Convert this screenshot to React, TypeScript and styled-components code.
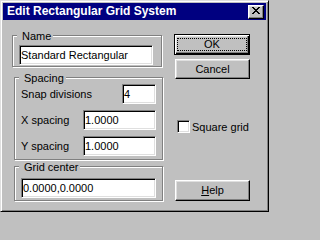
import React from "react";
import styled, { createGlobalStyle } from "styled-components";

const Global = createGlobalStyle`
  html, body { margin: 0; padding: 0; background: #c0c0c0; }
  body {
    font-family: "Liberation Sans", Arial, sans-serif;
    font-size: 11px;
    color: #000;
  }
  #root { width: 269px; height: 212px; }
`;

const Window = styled.div`
  box-sizing: border-box;
  width: 269px;
  height: 212px;
  background: #c0c0c0;
  border: 1px solid;
  border-color: #dfdfdf #000 #000 #dfdfdf;
  box-shadow: inset 1px 1px 0 #fff, inset -1px -1px 0 #808080;
  padding: 2px;
  display: flex;
  flex-direction: column;
`;

const TitleBar = styled.div`
  height: 17px;
  background: #000080;
  display: flex;
  align-items: flex-start;
  padding: 0 2px;
  flex: none;
`;

const TitleText = styled.span`
  color: #fff;
  font-weight: bold;
  font-size: 12px;
  line-height: 17px;
  padding-left: 2px;
  white-space: nowrap;
`;

const CloseButton = styled.button`
  box-sizing: border-box;
  margin: 2px 0 0 auto;
  width: 16px;
  height: 14px;
  padding: 1px 0 0 3px;
  border: 1px solid;
  border-color: #fff #000 #000 #fff;
  box-shadow: inset -1px -1px 0 #808080, inset 1px 1px 0 #dfdfdf;
  background: #c0c0c0;
  display: flex;
  align-items: flex-start;
  justify-content: flex-start;
  svg { display: block; }
`;

const Body = styled.div`
  flex: 1;
  display: flex;
  padding: 14px 0 0 9px;
  gap: 10px;
`;

const LeftCol = styled.div`
  width: 152px;
  display: flex;
  flex-direction: column;
  padding-top: 1px;
`;

const RightCol = styled.div`
  width: 80px;
  display: flex;
  flex-direction: column;
  align-items: flex-start;
`;

const GroupBox = styled.div<{ $w: number; $ml?: number; $mt?: number; $pad: string }>`
  position: relative;
  box-sizing: border-box;
  width: ${(p) => p.$w}px;
  margin-left: ${(p) => p.$ml ?? 0}px;
  margin-top: ${(p) => p.$mt ?? 0}px;
  padding: ${(p) => p.$pad};
  border: 1px solid #808080;
  box-shadow: 1px 1px 0 #fff, inset 1px 1px 0 #fff;
`;

const Legend = styled.span`
  position: absolute;
  top: -6px;
  left: 4px;
  padding: 0 2px 0 5px;
  background: #c0c0c0;
  line-height: 13px;
  white-space: nowrap;
`;

const Row = styled.div`
  display: flex;
  align-items: center;
  justify-content: space-between;
  height: 20px;
  & + & { margin-top: 6px; }
`;

const Label = styled.span`
  white-space: nowrap;
`;

const Field = styled.input<{ $w: number }>`
  box-sizing: border-box;
  display: block;
  width: ${(p) => p.$w}px;
  height: 20px;
  margin: 0;
  padding: 0 0 0 1px;
  border: 1px solid;
  border-color: #808080 #fff #fff #808080;
  box-shadow: inset 1px 1px 0 #000, inset -1px -1px 0 #dfdfdf;
  background: #fff;
  font: inherit;
  font-size: 11px;
  color: #000;
  outline: none;
`;

const Button = styled.button<{ $w: number; $h: number; $ml?: number; $mt?: number }>`
  box-sizing: border-box;
  width: ${(p) => p.$w}px;
  height: ${(p) => p.$h}px;
  margin: ${(p) => p.$mt ?? 0}px 0 0 ${(p) => p.$ml ?? 0}px;
  padding: 0;
  border: 1px solid;
  border-color: #fff #000 #000 #fff;
  box-shadow: inset -1px -1px 0 #808080, inset 1px 1px 0 #dfdfdf;
  background: #c0c0c0;
  font: inherit;
  font-size: 11px;
  color: #000;
  display: flex;
  align-items: center;
  justify-content: center;
  line-height: 13px;
  u { text-underline-offset: 1px; }
`;

const DefaultButton = styled(Button)`
  padding: 3px 2px;
  border-color: #000;
  box-shadow: inset 1px 1px 0 #fff, inset -1px -1px 0 #000,
    inset -2px -2px 0 #808080, inset 2px 2px 0 #dfdfdf;
`;

const FocusRing = styled.span`
  box-sizing: border-box;
  width: 100%;
  height: 100%;
  border: 1px dotted #000;
  display: flex;
  align-items: center;
  justify-content: center;
`;

const CheckRow = styled.label<{ $ml: number; $mt: number }>`
  display: flex;
  align-items: center;
  gap: 2px;
  margin: ${(p) => p.$mt}px 0 0 ${(p) => p.$ml}px;
  white-space: nowrap;
`;

const CheckBox = styled.span`
  box-sizing: border-box;
  width: 13px;
  height: 13px;
  border: 1px solid;
  border-color: #808080 #fff #fff #808080;
  box-shadow: inset 1px 1px 0 #000, inset -1px -1px 0 #dfdfdf;
  background: #fff;
  flex: none;
`;

const CloseGlyph = () => (
  <svg width="8" height="7" viewBox="0 0 8 7" shapeRendering="crispEdges">
    <path
      fill="#000"
      d="M0 0h2v1H0zM6 0h2v1H6zM1 1h2v1H1zM5 1h2v1H5zM2 2h4v1H2zM3 3h2v1H3zM2 4h4v1H2zM1 5h2v1H1zM5 5h2v1H5zM0 6h2v1H0zM6 6h2v1H6z"
    />
  </svg>
);

export default function App() {
  return (
    <>
      <Global />
      <Window>
        <TitleBar>
          <TitleText>Edit Rectangular Grid System</TitleText>
          <CloseButton aria-label="Close">
            <CloseGlyph />
          </CloseButton>
        </TitleBar>
        <Body>
          <LeftCol>
            <GroupBox $w={150} $pad="9px 8px 1px 6px">
              <Legend>Name</Legend>
              <Field $w={134} readOnly value="Standard Rectangular" />
            </GroupBox>
            <GroupBox $w={149} $ml={2} $mt={10} $pad="6px 6px 3px 6px">
              <Legend>Spacing</Legend>
              <Row>
                <Label>Snap divisions</Label>
                <Field $w={34} readOnly value="4" />
              </Row>
              <Row>
                <Label>X spacing</Label>
                <Field $w={73} readOnly value="1.0000" />
              </Row>
              <Row>
                <Label>Y spacing</Label>
                <Field $w={73} readOnly value="1.0000" />
              </Row>
            </GroupBox>
            <GroupBox $w={149} $ml={2} $mt={6} $pad="11px 6px 2px 6px">
              <Legend>Grid center</Legend>
              <Field $w={135} readOnly value="0.0000,0.0000" />
            </GroupBox>
          </LeftCol>
          <RightCol>
            <DefaultButton $w={76} $h={21}>
              <FocusRing>OK</FocusRing>
            </DefaultButton>
            <Button $w={75} $h={20} $ml={1} $mt={4}>
              Cancel
            </Button>
            <CheckRow $ml={3} $mt={41}>
              <CheckBox />
              <span>Square grid</span>
            </CheckRow>
            <Button $w={75} $h={21} $ml={1} $mt={47}>
              <span>
                <u>H</u>elp
              </span>
            </Button>
          </RightCol>
        </Body>
      </Window>
    </>
  );
}
